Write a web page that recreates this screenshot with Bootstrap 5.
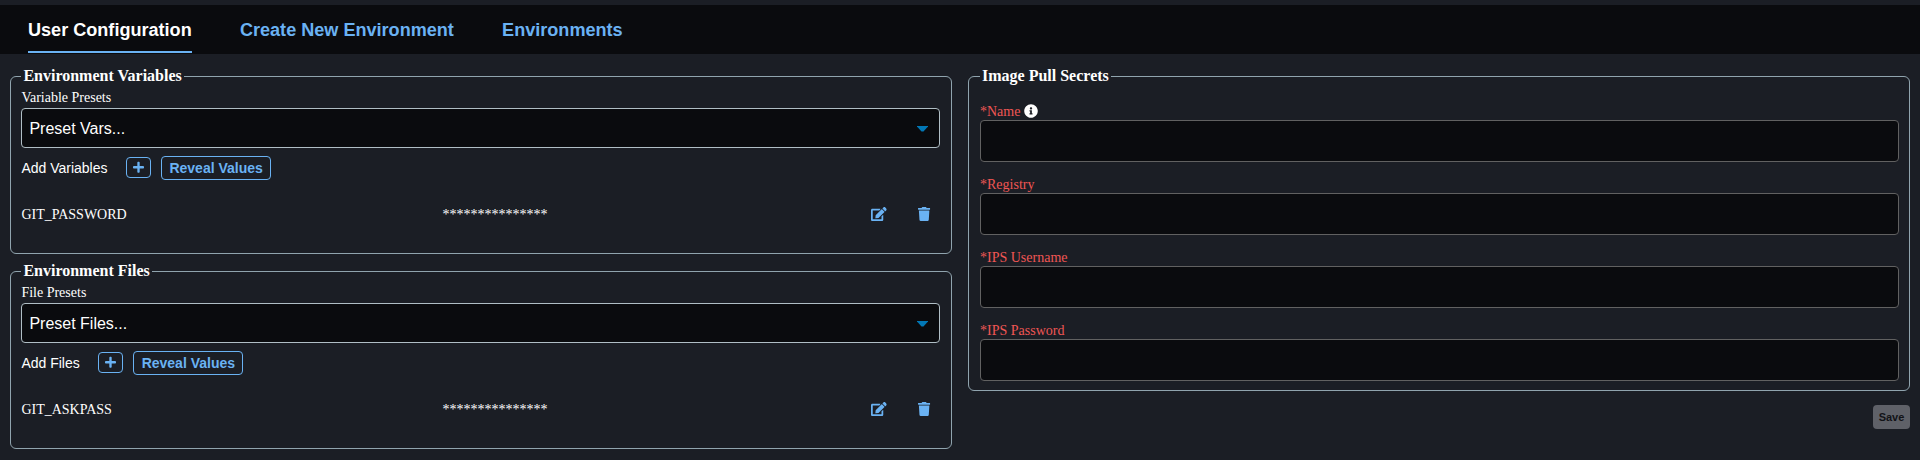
<!DOCTYPE html>
<html lang="en">
<head>
<meta charset="utf-8">
<meta name="viewport" content="width=device-width, initial-scale=1">
<title>User Configuration</title>
<link href="https://cdn.jsdelivr.net/npm/bootstrap@5.3.0/dist/css/bootstrap.min.css" rel="stylesheet">
<style>
  :root { --accent: #6ab2f3; --page: #1b1e25; --well: #0a0b0e; --line: #90a4ae; }
  body { background: var(--page); color: #fff; font: 14px/16px "Liberation Serif", serif; height: 460px; overflow: hidden; }
  .sans { font-family: "Liberation Sans", sans-serif; }
  .tabs { margin-top: 5px; height: 49px; padding: 0 28px 1px; gap: 48.2px; background: var(--well); }
  .tabs a { font-size: 18.08px; font-weight: 700; line-height: 50px; height: 48px; color: var(--accent); text-decoration: none; }
  .tabs a.active { color: #fff; border-bottom: 2px solid var(--accent); }
  .panels { padding: 13px 10px 0; gap: 16px; }
  .panel-col { flex: 1 1 0; }
  .group { border: 1px solid var(--line); border-radius: 6px; padding: 0 11px 0 10.4px; }
  .group legend { float: none; width: auto; margin: 0; padding: 0 2px; font-size: 16px; font-weight: 700; line-height: 18px; }
  .group.env { height: 187px; margin-bottom: 8px; }
  .group.secrets { height: 324px; padding: 0 10px 0 11px; }
  .preset-label { margin: 5px 0 2px; }
  .preset { height: 40px; border: 1px solid #b0bec5; border-radius: 4px; background: var(--well); padding: 1px 11px 0 7px; font-size: 16px; }
  .caret { width: 11px; height: 6px; background: #0277b5; clip-path: polygon(0 0, 100% 0, 100% 17%, 59% 100%, 41% 100%, 0 17%); }
  .tools { height: 24px; margin-top: 8px; }
  .btn-line { --bs-btn-padding-x: 0; --bs-btn-padding-y: 0; --bs-btn-font-size: 14px; --bs-btn-font-weight: 700; --bs-btn-line-height: 16px; --bs-btn-border-radius: 4px; --bs-btn-color: var(--accent); --bs-btn-border-color: var(--accent); }
  .btn-plus { width: 25px; height: 21px; margin: -1px 10px 0 18.6px; }
  .btn-reveal { width: 110px; height: 24px; }
  .entry { margin-top: 26px; height: 16px; }
  .entry span { padding-top: 2px; }
  .entry .key { width: 421px; }
  .entry svg { fill: var(--accent); }
  .entry .trash { margin: 0 9.5px 0 31.5px; }
  .field { height: 42px; border: 1px solid #616161; border-radius: 4px; background: var(--well); padding: 0; }
  .req { color: #f05654; height: 16px; }
  .req svg { margin: 0 0 2px 4px; }
  .field-row { margin-top: 15px; }
  .field-row.first { margin: 0; padding-top: 19px; }
  .btn-save { width: 37px; height: 24px; margin-top: 14px; border: 0; border-radius: 4px; background: #5f6168; color: #121317; font-size: 11px; font-weight: 700; line-height: 24px; padding: 0; }
</style>
</head>
<body>
<svg class="d-none">
  <symbol id="i-plus" viewBox="0 0 448 512"><path d="M416 208H272V64c0-17.670-14.330-32-32-32h-32c-17.670 0-32 14.330-32 32v144H32c-17.670 0-32 14.330-32 32v32c0 17.670 14.330 32 32 32h144v144c0 17.670 14.330 32 32 32h32c17.670 0 32-14.330 32-32V304h144c17.670 0 32-14.330 32-32v-32c0-17.670-14.330-32-32-32z"/></symbol>
  <symbol id="i-edit" viewBox="0 0 576 512"><path d="M402.600 83.200l90.200 90.200c3.800 3.800 3.800 10 0 13.800L274.400 405.600l-92.800 10.300c-12.400 1.400-22.900-9.100-21.500-21.500l10.300-92.800L388.800 83.200c3.800-3.800 10-3.800 13.800 0zm162-22.900l-48.800-48.800c-15.200-15.200-39.900-15.200-55.200 0l-35.400 35.400c-3.800 3.800-3.800 10 0 13.800l90.200 90.200c3.800 3.800 10 3.800 13.800 0l35.400-35.400c15.200-15.300 15.200-40 0-55.200zM384 346.200V448H64V128h229.800c3.200 0 6.200-1.300 8.500-3.500l40-40c7.600-7.600 2.200-20.500-8.500-20.500H48C21.500 64 0 85.500 0 112v352c0 26.500 21.500 48 48 48h352c26.500 0 48-21.500 48-48V306.200c0-10.700-12.900-16-20.500-8.500l-40 40c-2.200 2.300-3.500 5.300-3.500 8.500z"/></symbol>
  <symbol id="i-trash" viewBox="0 0 448 512"><path d="M432 32H312l-9.400-18.700A24 24 0 0 0 281.100 0H166.800a23.720 23.720 0 0 0-21.400 13.300L136 32H16A16 16 0 0 0 0 48v32a16 16 0 0 0 16 16h416a16 16 0 0 0 16-16V48a16 16 0 0 0-16-16zM32 128l21.200 339a48 48 0 0 0 47.900 45h245.800a48 48 0 0 0 47.900-45L416 128z"/></symbol>
  <symbol id="i-info" viewBox="0 0 512 512"><path d="M256 8C119.043 8 8 119.083 8 256c0 136.997 111.043 248 248 248s248-111.003 248-248C504 119.083 392.957 8 256 8zm0 110c23.196 0 42 18.804 42 42s-18.804 42-42 42-42-18.804-42-42 18.804-42 42-42zm56 254c0 6.627-5.373 12-12 12h-88c-6.627 0-12-5.373-12-12v-24c0-6.627 5.373-12 12-12h12v-64h-12c-6.627 0-12-5.373-12-12v-24c0-6.627 5.373-12 12-12h64c6.627 0 12 5.373 12 12v100h12c6.627 0 12 5.373 12 12v24z"/></symbol>
</svg>

<nav class="tabs sans d-flex">
  <a class="active" href="#">User Configuration</a>
  <a href="#">Create New Environment</a>
  <a href="#">Environments</a>
</nav>

<main class="panels d-flex">
  <div class="panel-col">
    <fieldset class="group env">
      <legend>Environment Variables</legend>
      <div class="preset-label">Variable Presets</div>
      <div class="preset sans d-flex align-items-center justify-content-between"><span>Preset Vars...</span><span class="caret"></span></div>
      <div class="tools sans d-flex align-items-center">Add Variables
        <button class="btn btn-line btn-plus d-flex align-items-center justify-content-center"><svg width="11" height="12.600" fill="currentColor"><use href="#i-plus"/></svg></button>
        <button class="btn btn-line btn-reveal">Reveal Values</button>
      </div>
      <div class="entry d-flex align-items-center">
        <span class="key">GIT_PASSWORD</span><span>***************</span>
        <svg class="ms-auto" width="15.750" height="14"><use href="#i-edit"/></svg>
        <svg class="trash" width="12.250" height="14"><use href="#i-trash"/></svg>
      </div>
    </fieldset>
    <fieldset class="group env mb-0">
      <legend>Environment Files</legend>
      <div class="preset-label">File Presets</div>
      <div class="preset sans d-flex align-items-center justify-content-between"><span>Preset Files...</span><span class="caret"></span></div>
      <div class="tools sans d-flex align-items-center">Add Files
        <button class="btn btn-line btn-plus d-flex align-items-center justify-content-center"><svg width="11" height="12.600" fill="currentColor"><use href="#i-plus"/></svg></button>
        <button class="btn btn-line btn-reveal">Reveal Values</button>
      </div>
      <div class="entry d-flex align-items-center">
        <span class="key">GIT_ASKPASS</span><span>***************</span>
        <svg class="ms-auto" width="15.750" height="14"><use href="#i-edit"/></svg>
        <svg class="trash" width="12.250" height="14"><use href="#i-trash"/></svg>
      </div>
    </fieldset>
  </div>
  <div class="panel-col d-flex flex-column">
    <fieldset class="group secrets">
      <legend>Image Pull Secrets</legend>
      <div class="field-row first"><div class="req d-flex align-items-center">*Name<svg width="14" height="14" fill="#fff"><use href="#i-info"/></svg></div><input class="field d-block w-100" type="text"></div>
      <div class="field-row"><div class="req">*Registry</div><input class="field d-block w-100" type="text"></div>
      <div class="field-row"><div class="req">*IPS Username</div><input class="field d-block w-100" type="text"></div>
      <div class="field-row"><div class="req">*IPS Password</div><input class="field d-block w-100" type="password"></div>
    </fieldset>
    <button class="btn-save sans align-self-end" disabled>Save</button>
  </div>
</main>
<script src="https://cdn.jsdelivr.net/npm/bootstrap@5.3.0/dist/js/bootstrap.bundle.min.js"></script>
</body>
</html>
